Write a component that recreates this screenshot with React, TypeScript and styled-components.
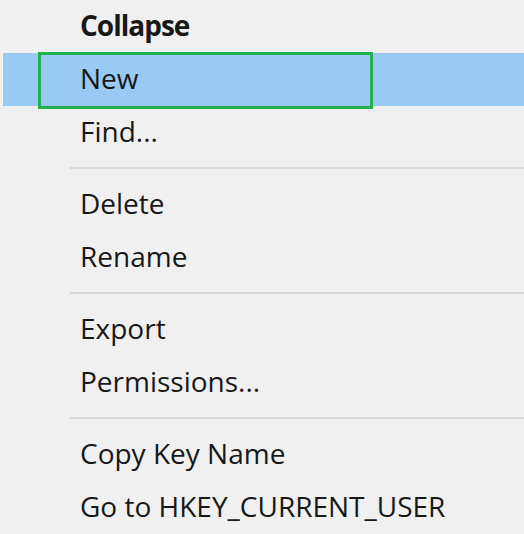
import React from 'react'
import styled, { createGlobalStyle } from 'styled-components'

const GlobalStyle = createGlobalStyle`
  html, body { margin: 0; padding: 0; background: #f0f0f0; }
  body { font-family: "Open Sans", "Noto Sans", sans-serif; }
`

const Menu = styled.ul`
  position: relative;
  list-style: none;
  margin: 0;
  padding: 0 0 0 3px;
  width: 521px;
  height: 534px;
  overflow: hidden;
  background: #f0f0f0;
`

const Item = styled.li<{ $active?: boolean; $bold?: boolean }>`
  box-sizing: border-box;
  display: flex;
  align-items: center;
  height: 53px;
  padding: 0 0 3px 77px;
  font-size: 28px;
  font-weight: ${p => (p.$bold ? 700 : 400)};
  letter-spacing: ${p => (p.$bold ? '-1px' : '0')};
  color: #181818;
  background: ${p => (p.$active ? '#99c9f5' : 'transparent')};
  white-space: nowrap;
`

const Separator = styled.li`
  height: 2px;
  margin: 8px 0 9px 67px;
  background: #d8d8d8;
`

const Highlight = styled.div`
  position: absolute;
  left: 38px;
  top: 52px;
  width: 335px;
  height: 57px;
  box-sizing: border-box;
  border: 3px solid #22b14c;
  pointer-events: none;
`

type Entry = { label: string; bold?: boolean; active?: boolean } | 'sep'

const entries: Entry[] = [
  { label: 'Collapse', bold: true },
  { label: 'New', active: true },
  { label: 'Find...' },
  'sep',
  { label: 'Delete' },
  { label: 'Rename' },
  'sep',
  { label: 'Export' },
  { label: 'Permissions...' },
  'sep',
  { label: 'Copy Key Name' },
  { label: 'Go to HKEY_CURRENT_USER' },
]

const App = () => {
  return (
    <>
      <GlobalStyle />
      <Menu>
        {entries.map((e, i) =>
          e === 'sep' ? (
            <Separator key={i} />
          ) : (
            <Item key={i} $bold={e.bold} $active={e.active}>
              {e.label}
            </Item>
          )
        )}
        <Highlight />
      </Menu>
    </>
  )
}

export default App
